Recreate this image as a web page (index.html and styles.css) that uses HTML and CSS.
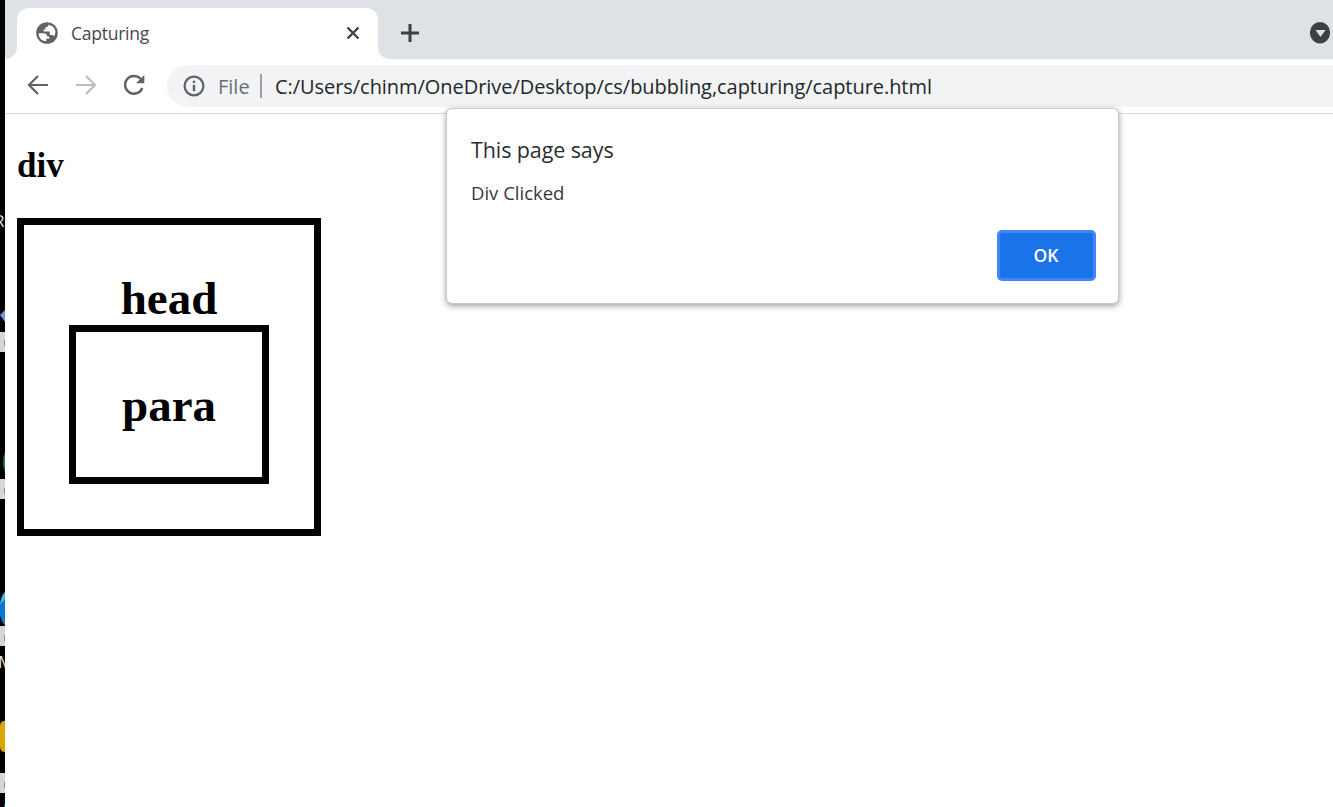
FILE: index.html
```html
<!DOCTYPE html>
<html lang="en">
<head>
<meta charset="utf-8">
<title>Capturing</title>
<link rel="stylesheet" href="styles.css">
</head>
<body>
<div class="screen">
  <aside class="desktop">
    <svg width="5" height="807" viewBox="0 0 5 807">
      <text x="-6" y="227" class="desk-label">R</text>
      <path d="M0 315l5-5v12z" fill="#6c99e0"/>
      <path d="M0 332h5v20H0zM0 479h5v20H0zM0 626h5v20H0zM0 773h5v20H0z" fill="#d6d6d8"/>
      <path d="M4 340h1v6H4zM4 488h1v6H4zM4 635h1v6H4zM4 782h1v6H4z" fill="#7d94a8"/>
      <path d="M5 452q-4 10 0 20z" fill="#168052"/>
      <path d="M5 592q-5 5-5 15v8q1 6 5 11z" fill="#0878d0"/>
      <path d="M5 592q-4 4-5 13l5-6z" fill="#43b6e8"/>
      <text x="-2" y="668" class="desk-label">M</text>
      <path d="M5 721q-5 0-5 5v20q0 6 5 6z" fill="#dba500"/>
      <path d="M4 804h1v3H4z" fill="#246ba0"/>
    </svg>
  </aside>
  <div class="window">
    <header class="tabstrip">
      <div class="tab-lead"></div>
      <div class="tab">
        <svg class="globe" width="22" height="22" viewBox="0 0 22 22">
          <circle cx="11" cy="11" r="10.800" fill="#5f6368"/>
          <path d="M2.600 11.200h5q3.600.2 3.600 3.300h2v2.200h-3v2.500C5.900 19.300 2.600 15.700 2.600 11.200zM12.400 2.800c-.2 1.800-1 2.400-3 2.500v2.200H7.600v2h6.200v3.600h2.100c1.100 0 1.800.6 2 1.400 3.300-4.200 1.200-10.600-5.500-11.700z" fill="#fff"/>
        </svg>
        <span class="tab-title">Capturing</span>
        <svg class="close" width="14" height="14" viewBox="0 0 14 14"><path d="M1.500 1.500l11 11m0-11l-11 11" stroke="#3c4043" stroke-width="2.300" fill="none"/></svg>
      </div>
      <div class="tab-tail"></div>
      <div class="strip-rest">
        <svg width="20" height="20" viewBox="0 0 20 20"><path d="M10 1v18M1 10h18" stroke="#3c4043" stroke-width="3" fill="none"/></svg>
        <svg width="20" height="22" viewBox="0 0 20 22"><rect width="20" height="21.500" rx="10" fill="#3c4043"/><path d="M5.500 8h10l-5 7z" fill="#dee1e6"/></svg>
      </div>
    </header>
    <nav class="toolbar">
      <svg class="nav-icon" width="22" height="22" viewBox="0 0 22 22"><path d="M21 11H2.500M11 2l-9 9 9 9" stroke="#5f6368" stroke-width="2.200" fill="none"/></svg>
      <svg class="nav-icon" width="22" height="22" viewBox="0 0 22 22"><path d="M1 11h18.500M11 2l9 9-9 9" stroke="#babcbe" stroke-width="2.200" fill="none"/></svg>
      <svg class="nav-icon" width="22" height="22" viewBox="0 0 22 22"><path d="M17.500 4.800A8.900 8.900 0 1 0 19.300 14" stroke="#5f6368" stroke-width="2.400" fill="none"/><path d="M21.300 1v8.300H13z" fill="#5f6368"/></svg>
      <div class="omnibox">
        <svg class="info" width="22" height="22" viewBox="0 0 22 22"><circle cx="11" cy="11" r="9.400" fill="none" stroke="#5f6368" stroke-width="2.200"/><path d="M9.800 5.800h2.400V8H9.800zM9.800 9.700h2.400v6.500H9.800z" fill="#5f6368"/></svg>
        <span class="scheme">File</span>
        <span class="divider"></span>
        <span class="url">C:/Users/chinm/OneDrive/Desktop/cs/bubbling,capturing/capture.html</span>
      </div>
    </nav>
    <main class="page">
      <h2 class="heading">div</h2>
      <div class="outer">
        <div class="label">head</div>
        <div class="inner"><div class="label">para</div></div>
      </div>
    </main>
  </div>
  <section class="dialog" role="dialog">
    <div class="dialog-title">This page says</div>
    <div class="dialog-message">Div Clicked</div>
    <button class="ok">OK</button>
  </section>
</div>
</body>
</html>
```
FILE: styles.css
```css
* { box-sizing: border-box; }
body {
  margin: 0;
  overflow: hidden;
  background: #fff;
  font-family: "Open Sans", "Noto Sans", sans-serif;
}
.screen {
  position: relative;
  display: flex;
  width: 1333px;
  height: 807px;
  overflow: hidden;
}
.desktop { width: 5px; flex: none; background: #000; }
.desktop svg { display: block; }
.desk-label { font-size: 17px; fill: #ddd; }
.window { flex: 1; min-width: 0; }
.tabstrip {
  display: flex;
  height: 59px;
  background: linear-gradient(#dee1e6 30px, #fff 30px);
}
.tab-lead { width: 12px; background: #dee1e6; border-radius: 0 0 12px 0; }
.tab {
  display: flex;
  align-items: center;
  width: 361px;
  height: 51px;
  margin-top: 8px;
  padding: 0 18px 1px 19px;
  border-radius: 12px 12px 0 0;
  background: #fff;
}
.tab-title {
  margin-left: 13px;
  font-size: 17.500px;
  line-height: 24px;
  color: #45494d;
  letter-spacing: -0.25px;
}
.close { margin-left: auto; }
.tab-tail { width: 12px; background: #dee1e6; border-radius: 0 0 0 12px; }
.strip-rest {
  display: flex;
  flex: 1;
  align-items: center;
  justify-content: space-between;
  padding: 7px 3px 0 10px;
  background: #dee1e6;
}
.toolbar {
  display: flex;
  height: 55px;
  padding: 6px 0 6px 22px;
  border-bottom: 1px solid #d9dbde;
  background: #fff;
}
.nav-icon { flex: none; margin: 9px 26px 0 0; }
.omnibox {
  display: flex;
  flex: 1;
  align-items: center;
  height: 42px;
  margin-left: -4px;
  padding-left: 16px;
  border-radius: 21px 0 0 21px;
  background: #f1f3f4;
  font-size: 20px;
  white-space: nowrap;
}
.info { margin-right: 13px; }
.scheme { width: 42px; color: #6b6f74; }
.divider { width: 2px; height: 24px; margin-right: 13px; background: #9b9ea2; }
.url { color: #24272a; letter-spacing: -0.05px; }
.page { padding: 32px 12px; font-family: "Liberation Serif", serif; font-weight: bold; color: #000; }
.heading { margin: 0 0 32px; font-size: 35px; line-height: 40px; }
.outer { width: 304px; height: 318px; padding: 47px 45px 45px; border: 7px solid #000503; }
.label { font-size: 47px; line-height: 52px; text-align: center; }
.inner { height: 159px; margin-top: 1px; padding-top: 47px; border: 7px solid #000503; }
.dialog {
  position: absolute;
  left: 447px;
  top: 109px;
  display: flex;
  flex-direction: column;
  width: 671px;
  height: 194px;
  padding: 25px 22px 22px 24px;
  border-radius: 5px;
  background: #fff;
  box-shadow: 0 0 0 1px #c9c9c9, 0 2px 6px 1px rgba(0, 0, 0, .38);
}
.dialog-title { font-size: 21.500px; line-height: 32px; color: #2b2e31; letter-spacing: -0.1px; }
.dialog-message { margin-top: 13px; font-size: 18.500px; line-height: 28px; color: #35383b; }
.ok {
  align-self: flex-end;
  width: 99px;
  height: 51px;
  margin-top: 23px;
  padding: 0 1px 1px 0;
  border: 3px solid #4285f4;
  border-radius: 5px;
  background: #1a73e8;
  color: #fff;
  font: 600 17.500px "Open Sans", sans-serif;
}
```
